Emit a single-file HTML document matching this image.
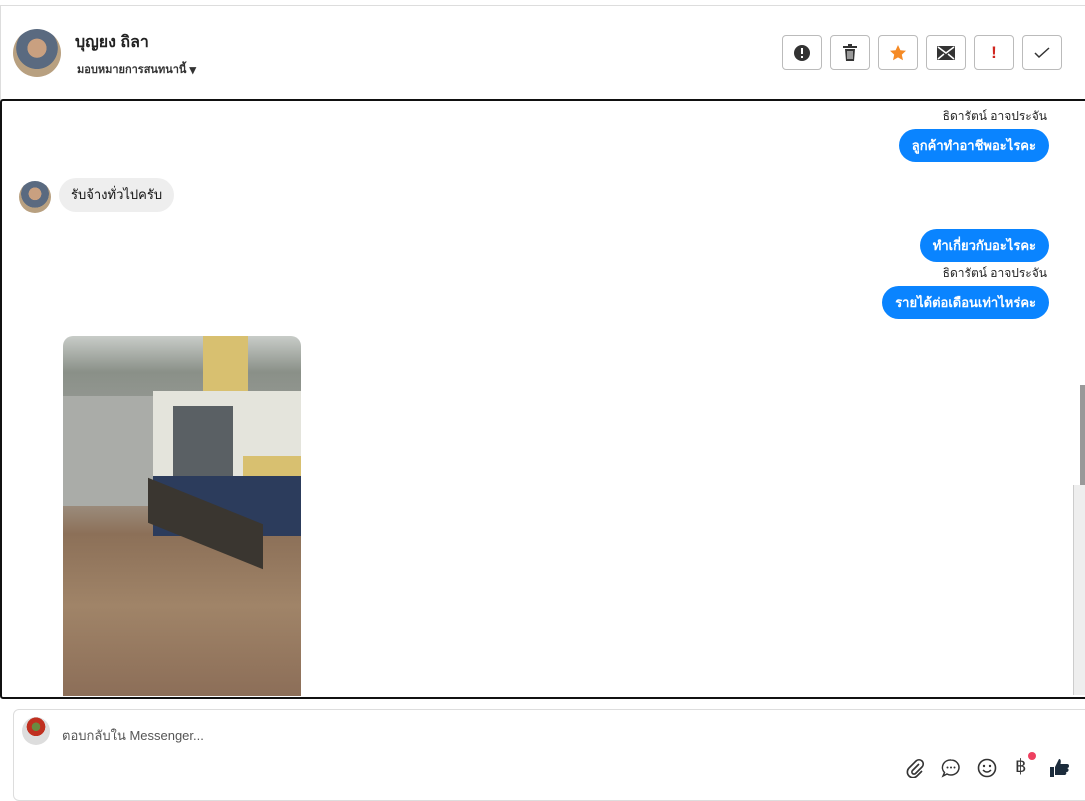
<!DOCTYPE html>
<html><head><meta charset="utf-8"><style>
body{margin:0;width:1085px;height:785px;overflow:hidden;background:#fff;font-family:"Liberation Sans","Noto Sans CJK SC",sans-serif;position:relative}
.abs{position:absolute}
.btn{position:absolute;top:35px;width:38px;height:33px;border:1px solid #bbb;border-radius:4px;background:#fff;display:flex;align-items:center;justify-content:center}
.bub{position:absolute;background:#0a84ff;color:#fff;font-weight:bold;font-size:13px;border-radius:17px;height:33px;line-height:33px;padding:0 13px}
.nm{position:absolute;font-size:12px;color:#222;right:38px}
</style></head><body>
<div class="abs" style="left:0;top:5px;width:1085px;height:1px;background:#ddd"></div>
<div class="abs" style="left:0;top:5px;width:1px;height:95px;background:#ddd"></div>
<div class="abs" style="left:13px;top:29px;width:48px;height:48px;border-radius:50%;background:radial-gradient(circle at 50% 40%,#c9a080 0 25%,#5a6a80 26% 55%,#b8a080 56%)"></div>
<div class="abs" style="left:75px;top:30px;font-size:16px;font-weight:bold;color:#222">บุญยง ถิลา</div>
<div class="abs" style="left:77px;top:60px;font-size:11px;font-weight:bold;color:#333">มอบหมายการสนทนานี้ <span style="font-size:13px;position:relative;top:1px">▾</span></div>
<div class="btn" style="left:782px"><svg width="18" height="18"><circle cx="9" cy="9" r="8" fill="#333"/><rect x="8" y="4" width="2" height="6" fill="#fff"/><rect x="8" y="12" width="2" height="2" fill="#fff"/></svg></div>
<div class="btn" style="left:830px"><svg width="16" height="18"><rect x="1" y="2" width="14" height="2" fill="#333"/><rect x="6" y="0" width="4" height="2" fill="#333"/><path d="M3 5h10l-1 12H4z" fill="#333"/><path d="M6 7v8M8 7v8M10 7v8" stroke="#fff" stroke-width="1"/></svg></div>
<div class="btn" style="left:878px"><svg width="18" height="18"><path d="M9 1l2.4 5.2 5.6.6-4.2 3.8 1.2 5.6L9 13.4 4 16.2l1.2-5.6L1 6.8l5.6-.6z" fill="#f58a25"/></svg></div>
<div class="btn" style="left:926px"><svg width="18" height="14"><rect width="18" height="14" rx="1" fill="#333"/><path d="M1 1l8 6 8-6M1 13l6-5M17 13l-6-5" stroke="#fff" stroke-width="1.5" fill="none"/></svg></div>
<div class="btn" style="left:974px;color:#d0261f;font-weight:bold;font-size:17px">!</div>
<div class="btn" style="left:1022px"><svg width="16" height="12"><path d="M1 6l4 4 10-9" stroke="#333" stroke-width="1.5" fill="none"/></svg></div>

<div class="abs" style="left:0;top:99px;width:1100px;height:596px;border:2px solid #111;border-radius:3px;overflow:hidden"></div>
<div class="nm" style="top:107px">ธิดารัตน์ อาจประจัน</div>
<div class="bub" style="right:36px;top:129px">ลูกค้าทำอาชีพอะไรคะ</div>
<div class="abs" style="left:19px;top:181px;width:32px;height:32px;border-radius:50%;background:radial-gradient(circle at 50% 40%,#c9a080 0 25%,#5a6a80 26% 55%,#b8a080 56%)"></div>
<div class="abs" style="left:59px;top:178px;height:34px;line-height:34px;padding:0 12px;background:#eee;border-radius:17px;font-size:13px;color:#111">รับจ้างทั่วไปครับ</div>
<div class="bub" style="right:36px;top:229px">ทำเกี่ยวกับอะไรคะ</div>
<div class="nm" style="top:264px">ธิดารัตน์ อาจประจัน</div>
<div class="bub" style="right:36px;top:286px">รายได้ต่อเดือนเท่าไหร่คะ</div>
<div class="abs" style="left:63px;top:336px;width:238px;height:360px;border-radius:10px 10px 0 0;overflow:hidden;background:linear-gradient(#c8ccc8 0,#8a9088 10%,#9a9c98 25%,#a8a49c 40%,#8c7058 55%,#a08468 75%,#8c6e58 100%)">
<div class="abs" style="left:0;top:60px;width:100px;height:110px;background:#aaaca8"></div>
<div class="abs" style="left:140px;top:0;width:45px;height:70px;background:#d8c070"></div>
<div class="abs" style="left:90px;top:55px;width:148px;height:95px;background:#e4e4dc"></div>
<div class="abs" style="left:110px;top:70px;width:60px;height:75px;background:#5a6064"></div>
<div class="abs" style="left:180px;top:120px;width:58px;height:20px;background:#d8c070"></div>
<div class="abs" style="left:90px;top:140px;width:148px;height:60px;background:#2c3c5c"></div>
<div class="abs" style="left:85px;top:165px;width:115px;height:45px;background:#3a3630;transform:skewY(22deg)"></div>
</div>
<div class="abs" style="left:1073px;top:485px;width:12px;height:210px;background:#eee;border-left:1px solid #ccc"></div>
<div class="abs" style="left:1080px;top:385px;width:5px;height:100px;background:#999"></div>

<div class="abs" style="left:13px;top:709px;width:1080px;height:90px;border:1px solid #ddd;border-radius:6px"></div>
<div class="abs" style="left:22px;top:717px;width:28px;height:28px;border-radius:50%;background:radial-gradient(circle at 50% 35%,#6a8a40 0 18%,#c03020 19% 40%,#ddd 41%)"></div>
<div class="abs" style="left:62px;top:725px;font-size:13px;color:#555">ตอบกลับใน Messenger...</div>
<div class="abs" style="left:905px;top:758px;font-size:18px;color:#333">
<svg width="20" height="20" style="position:absolute;left:0"><path d="M14 6l-6.5 6.5a2 2 0 0 0 3 3L17 9a4 4 0 0 0-6-6L4 10a5.5 5.5 0 0 0 8 8l5-5" stroke="#333" stroke-width="1.6" fill="none"/></svg>
<svg width="20" height="20" style="position:absolute;left:36px"><path d="M10 2a8 7.5 0 1 1-4 14l-4 2 1.5-3.5A8 7.5 0 0 1 10 2z" stroke="#333" stroke-width="1.5" fill="none"/><circle cx="6.5" cy="9.5" r="1" fill="#333"/><circle cx="10" cy="9.5" r="1" fill="#333"/><circle cx="13.5" cy="9.5" r="1" fill="#333"/></svg>
<svg width="20" height="20" style="position:absolute;left:72px"><circle cx="10" cy="10" r="8.5" stroke="#333" stroke-width="1.6" fill="none"/><circle cx="7" cy="8" r="1.2" fill="#333"/><circle cx="13" cy="8" r="1.2" fill="#333"/><path d="M6 12q4 4 8 0" stroke="#333" stroke-width="1.5" fill="none"/></svg>
<span style="position:absolute;left:110px;top:-2px;font-size:18px">฿</span>
<div style="position:absolute;left:123px;top:-6px;width:8px;height:8px;border-radius:50%;background:#ee4060"></div>
<svg width="20" height="20" style="position:absolute;left:144px"><path d="M1 9h4v10H1zM6 9l4-8c2 0 2 2 1.5 5H18a2 2 0 0 1 0 4 2 2 0 0 1-1 4 2 2 0 0 1-1 3H6z" fill="#1c2c3c"/></svg>
</div>
</body></html>
